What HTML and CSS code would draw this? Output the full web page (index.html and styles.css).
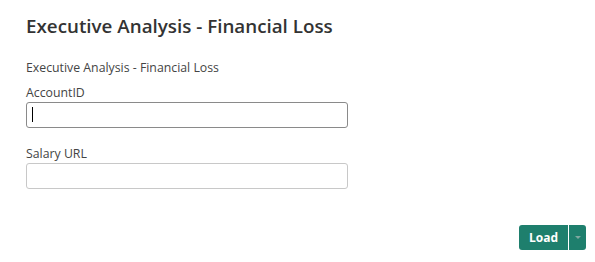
FILE: index.html
```html
<!DOCTYPE html>
<html lang="en">
<head>
    <meta charset="UTF-8">
    <title>Executive Analysis - Financial Loss</title>
    <link rel="stylesheet" href="styles.css">
</head>
<body>
    <div class="panel">
        <h1>Executive Analysis - Financial Loss</h1>

        <p class="desc">Executive Analysis - Financial Loss</p>

        <!-- Parameters -->
        <div class="field">
            <label for="account-id">AccountID</label>
            <div class="input focused" id="account-id"><span class="caret"></span></div>
        </div>
        <div class="field">
            <label for="salary-url">Salary URL</label>
            <div class="input" id="salary-url"></div>
        </div>

        <div class="actions">
            <button class="load-btn">Load</button>
            <button class="drop-btn"><span class="arrow"></span></button>
        </div>
    </div>
</body>
</html>
```

FILE: styles.css
```css
body {
    margin: 0;
    font-family: 'Open Sans', sans-serif;
    color: #333;
    background-color: #fff;
}

.panel {
    padding: 12px 9px 0 26px;
}

h1 {
    margin: 0 0 20px 0;
    font-size: 18.8px;
    font-weight: 600;
    color: #333;
    line-height: 28px;
}

.desc {
    margin: 0 0 9px 0;
    font-size: 12.3px;
    line-height: 16px;
    color: #444;
}

.field {
    width: 322px;
    margin-bottom: 18px;
}

.field label {
    display: block;
    font-size: 12.3px;
    line-height: 16px;
    color: #444;
    margin-bottom: 1px;
}

.input {
    box-sizing: border-box;
    height: 26px;
    border: 1px solid #c8c8c8;
    border-radius: 3px;
    padding: 4px 5px;
}

.input.focused {
    border-color: #8a8a8a;
}

.caret {
    display: block;
    width: 1px;
    height: 15px;
    background-color: #000;
}

.actions {
    display: flex;
    justify-content: flex-end;
    gap: 1px;
    margin-top: 36px;
}

.actions button {
    height: 25px;
    border: none;
    background-color: #1e7f6d;
    color: #fff;
    cursor: pointer;
}

.load-btn {
    width: 49px;
    font-family: 'Open Sans', sans-serif;
    font-size: 12px;
    font-weight: 700;
    border-radius: 3px 0 0 3px;
}

.drop-btn {
    width: 17px;
    padding: 0;
    border-radius: 0 3px 3px 0;
}

.arrow {
    display: block;
    margin: 0 auto;
    width: 0;
    height: 0;
    border-left: 3px solid transparent;
    border-right: 3px solid transparent;
    border-top: 3px solid #7fa79f;
}
```
